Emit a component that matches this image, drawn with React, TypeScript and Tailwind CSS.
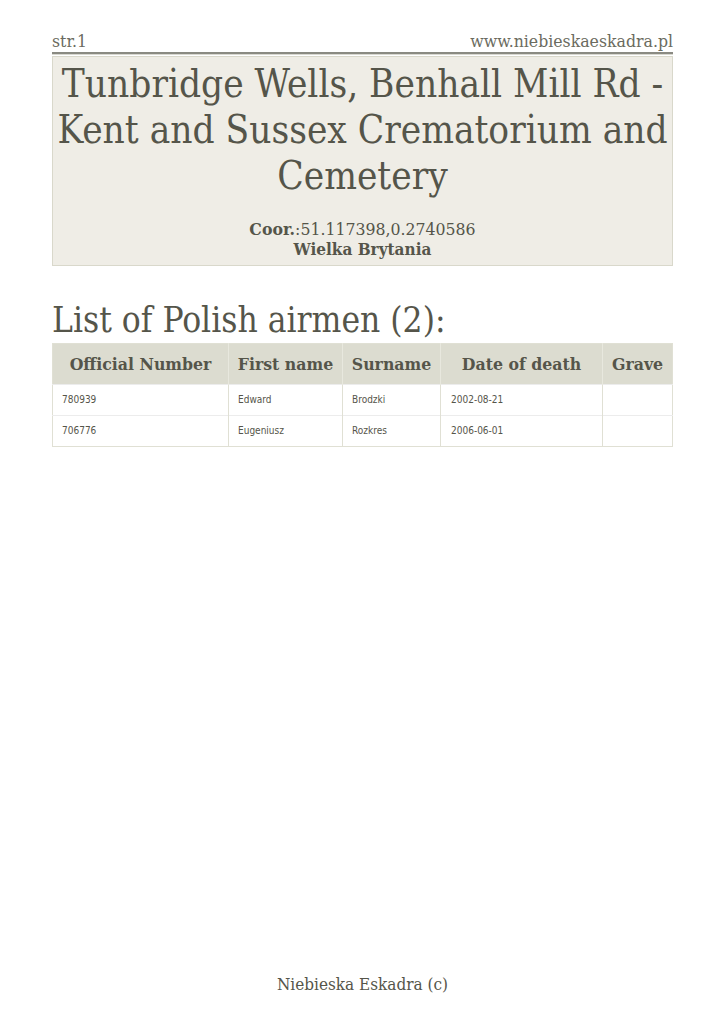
const rows = [
  { num: "780939", first: "Edward", last: "Brodzki", date: "2002-08-21", grave: "" },
  { num: "706776", first: "Eugeniusz", last: "Rozkres", date: "2006-06-01", grave: "" },
];

const serif = "font-['DejaVu_Serif',serif] [font-stretch:condensed]";

export default function App() {
  return (
    <div className="min-h-[1024px] w-[725px] bg-white flex flex-col">
      <div className="mx-[52px] flex-1">
        {/* page header */}
        <div className={`${serif} flex justify-between items-end pt-[31px] text-[17.5px] leading-[20px] text-[#6b6b60]`}>
          <span>str.1</span>
          <span>www.niebieskaeskadra.pl</span>
        </div>
        <div className="mt-[1px] h-[2px] bg-[#8a8a82]" />
        <div className="h-[1px] bg-[#d8d8d0]" />

        {/* location box */}
        <div className={`${serif} mt-[1px] border border-[#d9d8cb] bg-[#efede6] text-center text-[#55554a] pt-[4px] pb-[5px]`}>
          <h1 className="text-[38.4px] leading-[46px]">
            Tunbridge Wells, Benhall Mill Rd - Kent and Sussex Crematorium and Cemetery
          </h1>
          <div className="mt-[20px] text-[17.5px] leading-[20px]">
            <b>Coor.</b>:51.117398,0.2740586
          </div>
          <div className="text-[17px] leading-[21px] font-bold">Wielka Brytania</div>
        </div>

        <h2 className={`${serif} mt-[32px] text-[35px] leading-[44px] text-[#55554a]`}>
          List of Polish airmen (2):
        </h2>

        <table className="mt-[1px] w-full border-collapse border border-[#e0e0d4]">
          <thead>
            <tr className={`${serif} bg-[#dcdcd0] text-[#55554a] text-[17.5px] font-bold h-[41px]`}>
              <th className="w-[176px] border-r border-[#e8e8de] font-bold">Official Number</th>
              <th className="w-[114px] border-r border-[#e8e8de] font-bold">First name</th>
              <th className="w-[98px] border-r border-[#e8e8de] font-bold">Surname</th>
              <th className="w-[162px] border-r border-[#e8e8de] font-bold">Date of death</th>
              <th className="font-bold">Grave</th>
            </tr>
          </thead>
          <tbody className="font-['DejaVu_Sans',sans-serif] [font-stretch:condensed] text-[10px] text-[#55554a]">
            {rows.map((r) => (
              <tr key={r.num} className="h-[31px] border-t border-[#ececec]">
                <td className="px-[9px] pb-[2px] border-r border-[#e0e0d4]">{r.num}</td>
                <td className="px-[9px] pb-[2px] border-r border-[#e0e0d4]">{r.first}</td>
                <td className="px-[9px] pb-[2px] border-r border-[#e0e0d4]">{r.last}</td>
                <td className="px-[10px] pb-[2px] border-r border-[#e0e0d4]">{r.date}</td>
                <td className="px-[9px] pb-[2px]">{r.grave}</td>
              </tr>
            ))}
          </tbody>
        </table>
      </div>

      <div className={`${serif} text-center text-[17px] leading-[20px] text-[#55554a] pb-[30px]`}>
        Niebieska Eskadra (c)
      </div>
    </div>
  );
}
